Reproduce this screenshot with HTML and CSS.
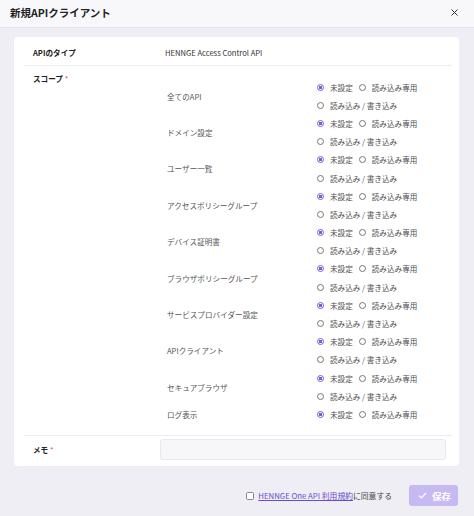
FILE: index.html
```html
<!DOCTYPE html>
<html>
<head>
<meta charset="UTF-8">
<title>新規APIクライアント</title>
<link rel="stylesheet" href="styles.css">
</head>
<body>

<div class="modal">
  <div class="head">
    <h1>新規APIクライアント</h1>
    <svg class="close" width="7" height="7" viewBox="0 0 7 7"><path d="M0.5 0.5l6 6M6.5 0.5l-6 6" stroke="#333" stroke-width="1"/></svg>
  </div>

  <div class="body">
    <div class="card">
      <div class="row">
        <div class="key">APIのタイプ</div>
        <div class="val">HENNGE Access Control API</div>
      </div>

      <div class="row scope">
        <div class="key">スコープ <span class="req">*</span></div>
        <div class="perms" id="perms"></div>
      </div>

      <div class="row memo">
        <div class="key">メモ <span class="req">*</span></div>
        <div class="val"><div class="input"></div></div>
      </div>
    </div>
  </div>

  <div class="foot">
    <label class="agree">
      <span class="check"></span>
      <a href="#">HENNGE One API 利用規約</a>に同意する
    </label>
    <button class="save">
      <svg width="9" height="7" viewBox="0 0 9 7"><path d="M1 3.6l2.4 2.3L8 1" fill="none" stroke="#fff" stroke-width="1.2"/></svg>
      保存
    </button>
  </div>
</div>

<script>
let scopes = ["全てのAPI","ドメイン設定","ユーザー一覧","アクセスポリシーグループ","デバイス証明書",
  "ブラウザポリシーグループ","サービスプロバイダー設定","APIクライアント","セキュアブラウザ","ログ表示"];

let box = document.getElementById("perms");
scopes.forEach(function(name, i){
  let opts = `<span class="opt"><i class="radio on"></i>未設定</span>
    <span class="opt"><i class="radio"></i>読み込み専用</span>`;
  if(name != "ログ表示") opts += `<span class="opt"><i class="radio"></i>読み込み / 書き込み</span>`;
  box.innerHTML += `
  <div class="perm">
    <div class="pname">${name}</div>
    <div class="opts">${opts}</div>
  </div>`;
});
</script>

</body>
</html>
```

FILE: styles.css
```css
body{margin:0;font-family:"Noto Sans CJK JP","Noto Sans",sans-serif;color:#222;background:#eeeef4}
.modal{width:474px;height:516px;display:flex;flex-direction:column;overflow:hidden}

.head{
 height:28px;box-sizing:border-box;background:#f8f8fb;border-bottom:1px solid #e4e4ec;
 display:flex;align-items:center;justify-content:space-between;padding:0 16px 2px 10px
}
.head h1{margin:0;font-size:10.5px;font-weight:700;letter-spacing:0}

.body{flex:1;padding:9px 15px 0 14px}
.card{background:#fff;border-radius:4px;padding:3px 7px 3px 10px}

.row{display:grid;grid-template-columns:136px 1fr;border-bottom:1px solid #eeeef2;font-size:7.6px}
.row:last-child{border-bottom:none}
.key{padding:7px 0 7px 9px;line-height:11px;font-weight:700}
.val{padding:7px 0 7px 5px;line-height:11px;color:#333}
.req{color:#e0407a;font-weight:400}

.scope .key{padding-top:7px}
.perms{padding:12px 0 11px}
.perm{display:grid;grid-template-columns:157px 1fr;align-items:center}
.pname{padding-left:7px;color:#555}
.opts{display:flex;flex-wrap:wrap;column-gap:6px;width:115px}
.opt{display:flex;align-items:center;height:18.2px;color:#505050;white-space:nowrap}
.radio{
 width:5px;height:5px;border:1px solid #777;border-radius:50%;margin-right:6px;
 display:inline-block;box-sizing:content-box
}
.radio.on{border-color:#7a5bd8;background:radial-gradient(circle,#7a5bd8 0 1.6px,#fff 2px)}

.memo .key{padding-top:8px}
.memo .val{padding:3px 6px 3px 0}
.input{height:19px;background:#f7f7fa;border:1px solid #e8e8ee;border-radius:3px}

.foot{
 height:48px;box-sizing:border-box;padding:17px 16px 0 0;
 display:flex;justify-content:flex-end;align-items:flex-start;gap:17px
}
.agree{display:flex;align-items:center;height:21px;font-size:7.8px;color:#444}
.check{width:6px;height:6px;border:1px solid #888;border-radius:1.5px;background:#fff;margin-right:4px}
.agree a{color:#6a4cd0;text-decoration:underline}
.save{
 width:49px;height:21px;background:#c7b9f2;color:#fff;border:none;border-radius:3px;
 font-family:inherit;font-size:9.5px;font-weight:700;padding:0 0 0 2px;
 display:flex;align-items:center;justify-content:center;gap:5px
}
```
